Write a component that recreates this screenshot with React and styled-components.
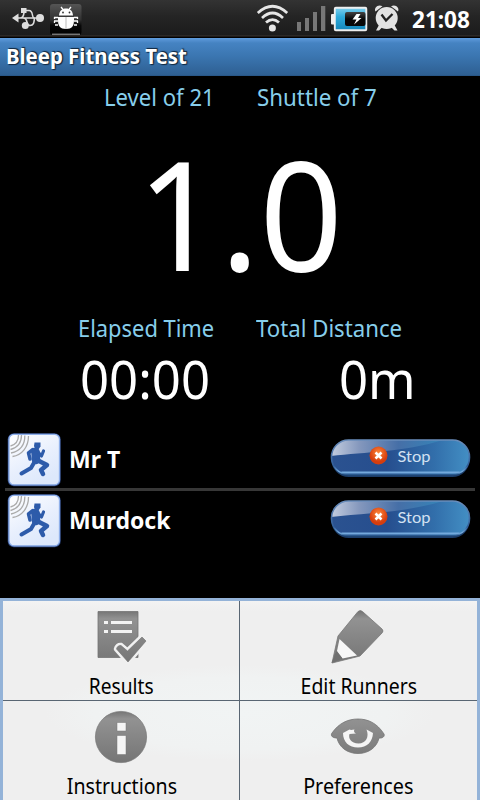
import React from 'react';
import styled, { createGlobalStyle } from 'styled-components';

const Global = createGlobalStyle`
  * { box-sizing: border-box; }
  body { margin: 0; background: #000; font-family: "Noto Sans", sans-serif; }
  svg { display: block; flex: none; }
`;

const Screen = styled.div`
  width: 480px;
  height: 800px;
  overflow: hidden;
  display: flex;
  flex-direction: column;
  background: #000;
  color: #fff;
`;

const StatusBar = styled.header`
  height: 38px;
  flex: none;
  display: flex;
  align-items: flex-start;
  padding-left: 11px;
  background: linear-gradient(#333 0, #242424 17px, #1b1b1b 35px, #3c3530 36px, #000 37px);
`;

const Spacer = styled.div`
  flex: 1;
`;

const Text = styled.span`
  display: block;
  width: max-content;
  white-space: nowrap;
  font-size: ${(p) => p.$size}px;
  line-height: ${(p) => p.$line}px;
  font-weight: ${(p) => (p.$bold ? 700 : 400)};
  transform: scaleX(${(p) => p.$squeeze || 1});
  transform-origin: ${(p) => p.$origin || 'left'} center;
`;

const Clock = styled.div`
  width: 69px;
  padding: 3px 0 0 1px;
`;

const TitleBar = styled.div`
  height: 38px;
  flex: none;
  padding: 3px 0 0 6px;
  background: linear-gradient(#5f9bdc 0, #4583c2 5px, #3b76b1 18px, #2e5f92 37px, #23507f 38px);
  text-shadow: 1px -1px 1px #10263d, 1px 1px 1px #10263d;
`;

const Captions = styled.div`
  display: grid;
  grid-template-columns: ${(p) => p.$columns};
  padding-left: ${(p) => p.$left}px;
  height: 28px;
  margin-top: ${(p) => p.$top}px;
  color: #87ceeb;
`;

const Score = styled.div`
  height: 160px;
  margin-top: 22px;
  padding-left: 136.5px;
`;

const Readings = styled.div`
  display: grid;
  grid-template-columns: 259px 1fr;
  height: 60px;
  margin-top: 7px;
  padding-left: 80px;
`;

const RunnerList = styled.div`
  margin: 21px 5px 0;
`;

const Runner = styled.div`
  display: flex;
  align-items: flex-start;
  height: 61px;
  padding: 2px 3px 0 2px;
  border-bottom: 3px solid ${(p) => (p.$last ? 'transparent' : '#373737')};
`;

const RunnerName = styled.div`
  flex: 1;
  padding: 10px 0 0 7px;
`;

const StopButton = styled.button`
  width: 142px;
  height: 42px;
  margin-top: 5px;
  padding: 0;
  border: 0;
  background: none;
`;

const Menu = styled.nav`
  flex: 1;
  margin-top: 46px;
  border: 3px solid #94b3d8;
  border-bottom: 0;
  display: grid;
  grid-template-columns: 237px 237px;
  grid-template-rows: 100px 99px;
  background:
    radial-gradient(ellipse 195px 48px at 237px 112px, #f1f4f4 0, #f0f2f2 75%, transparent 100%),
    linear-gradient(#f3f3f3, #efefef 10px);
`;

const MenuItem = styled.div`
  display: flex;
  flex-direction: column;
  align-items: center;
  color: #000;
  border-bottom: ${(p) => (p.$top ? '1px solid #596673' : '0')};
  border-right: ${(p) => (p.$left ? '1px solid #596673' : '0')};
  padding-top: 5px;
  padding-left: ${(p) => (p.$left ? 1 : 0)}px;
`;

const MenuIcon = styled.div`
  height: 65px;
  margin-right: 2px;
`;

const UsbIcon = () => (
  <svg width="34" height="36" viewBox="11 0 34 36" fill="none" stroke="#ddd" strokeWidth="1.8">
    <path d="M16 18H40M20 18C26 18 22 10.500 26 10.500M23 18C29 18 25 25.500 30 25.500C34 25.500 34 22 34.500 18" strokeWidth="1.600" />
    <path d="M26 10.500H29C34 10.500 31 18 34.500 18" strokeWidth="1.500" />
    <path d="M12 18L18.500 13.500V22.500Z" fill="#ddd" stroke="none" />
    <rect x="21" y="8" width="5.500" height="5" fill="#ddd" stroke="none" />
    <circle cx="25.300" cy="25.500" r="3.500" fill="#ddd" stroke="none" />
    <circle cx="40" cy="18" r="4" fill="#ddd" stroke="none" />
  </svg>
);

const BugIcon = () => (
  <svg width="38" height="36" viewBox="45 0 38 36">
    <defs>
      <linearGradient id="bug" x2="0" y2="1">
        <stop stopColor="#555" />
        <stop offset=".5" stopColor="#333" />
        <stop offset=".7" stopColor="#080808" />
        <stop offset="1" stopColor="#000" />
      </linearGradient>
    </defs>
    <rect x="50" y="4" width="31.500" height="31" rx="3" fill="url(#bug)" />
    <path d="M52 34.200H80" stroke="#aaa" strokeWidth="1" />
    <g fill="#fff">
      <path d="M59 15.500C59.500 10.500 62 8.500 66 8.500S72.500 10.500 73 15.500Z" />
      <path d="M58 17H74V20C74 26 72 29 66 29S58 26 58 20Z" />
    </g>
    <path d="M61 7L63.500 10M71 7L68.500 10M54 17.500H58M54 21H58M55 25H58M54.500 17V19M54.500 21V23M74 17.500H78M74 21H78M74 25H77M77.500 17V19M77.500 21V23" stroke="#fff" strokeWidth="1.300" />
    <path d="M66 17V29" stroke="#aaa" strokeWidth=".8" />
    <circle cx="63" cy="12.500" r=".9" fill="#333" />
    <circle cx="69.500" cy="12.500" r=".9" fill="#333" />
  </svg>
);

const StatusIcons = () => (
  <svg width="156" height="37" viewBox="255 0 156 37">
    <defs>
      <linearGradient id="charge" x2="0" y2="1">
        <stop stopColor="#7fd0ee" />
        <stop offset=".4" stopColor="#2eaada" />
        <stop offset="1" stopColor="#1487bb" />
      </linearGradient>
      <linearGradient id="cell" x2="0" y2="1">
        <stop stopColor="#444" />
        <stop offset=".5" stopColor="#080808" />
      </linearGradient>
    </defs>
    <g fill="none" stroke="#e6e6e6" strokeWidth="2.700">
      <path d="M257.800 13Q272.500 -.5 287.200 13" />
      <path d="M262 18Q272.500 8 283 18" />
      <path d="M266 22.600Q272.500 16.500 279 22.600" />
    </g>
    <circle cx="272.400" cy="28" r="3.500" fill="#e6e6e6" />
    <path d="M297 22h4v9h-4zM305 18h4v13h-4zM313 12h4v19h-4zM321 6h4.300v25H321z" fill="#777" />
    <rect x="331" y="14" width="4" height="10.500" rx="1" fill="#eee" />
    <rect x="334.800" y="7.800" width="31.500" height="22.500" rx="1" fill="url(#charge)" stroke="#eee" strokeWidth="1.900" />
    <rect x="345" y="12" width="20.500" height="14" rx="2" fill="url(#cell)" />
    <path d="M356.500 14L352.500 19.500H356.500L354 24.500L361.500 18H358L360.500 14Z" fill="#fff" />
    <g fill="#e3e3e3">
      <circle cx="386.700" cy="18" r="11" />
      <path d="M375.500 11.500C373.500 8 378 3.500 382.500 6.300ZM398 11.500C400 8 395.500 3.500 391 6.300Z" />
      <path d="M379 25L376 30.500H379L382.500 27ZM394.500 25L397.500 30.500H394.500L391 27Z" />
    </g>
    <path d="M381.500 14.500L386 20.500L392.500 14" fill="none" stroke="#222" strokeWidth="2.300" />
  </svg>
);

const RunnerIcon = () => (
  <svg width="55" height="56" viewBox="7 432 55 56">
    <defs>
      <linearGradient id="tile" x2=".6" y2="1">
        <stop stopColor="#fff" />
        <stop offset=".6" stopColor="#e8effd" />
        <stop offset="1" stopColor="#dde8fb" />
      </linearGradient>
    </defs>
    <rect x="7.700" y="433.200" width="53" height="53" rx="6" fill="#2c4680" />
    <rect x="9" y="434.300" width="50.500" height="50.500" rx="5" fill="url(#tile)" stroke="#8fb0ea" strokeWidth="1.300" />
    <g fill="none" stroke="#aaa" strokeWidth="1.300">
      <path d="M18.500 435C18.500 441 16 444.500 10.500 446M21.500 435C21.500 443 18 447.500 10.500 449.500M24.800 435.500C25 445 20 451 11 453M28.500 436C28.500 447 22 455 12.500 456.500" />
    </g>
    <path d="M34.500 442.500H40.500V446.500L38.500 449.500H35L34 446Z" fill="#2d5baa" />
    <g fill="none" stroke="#2d5baa" strokeLinejoin="round" strokeLinecap="round">
      <path d="M35.500 452L36 460" strokeWidth="8.500" />
      <path d="M33 449.500L28.500 453L30 459" strokeWidth="3.500" />
      <path d="M38 452L41.500 456L43.500 451" strokeWidth="3.200" />
      <path d="M35 461L31 468L21.500 473.500" strokeWidth="4" />
      <path d="M38 460.500L47 465L41 470L43 474" strokeWidth="4.500" />
    </g>
  </svg>
);

const StopArt = () => (
  <svg width="142" height="42" viewBox="330 437 142 42">
    <defs>
      <linearGradient id="pill">
        <stop stopColor="#2b5290" />
        <stop offset=".4" stopColor="#264e8e" />
        <stop offset=".75" stopColor="#326fab" />
        <stop offset="1" stopColor="#438fc4" />
      </linearGradient>
      <linearGradient id="gloss">
        <stop stopColor="#c4cee0" />
        <stop offset=".25" stopColor="#8598bd" />
        <stop offset=".6" stopColor="#466fa7" />
        <stop offset="1" stopColor="#3585b9" />
      </linearGradient>
      <linearGradient id="edge" x2="0" y2="1">
        <stop stopColor="#698dbb" />
        <stop offset=".75" stopColor="#315e99" />
        <stop offset=".93" stopColor="#77aee0" />
        <stop offset="1" stopColor="#28588e" />
      </linearGradient>
      <radialGradient id="cross" cy=".35">
        <stop stopColor="#ff8a3c" />
        <stop offset="1" stopColor="#d63d0e" />
      </radialGradient>
      <clipPath id="pillClip"><rect x="331.500" y="440" width="138" height="34.500" rx="17" /></clipPath>
    </defs>
    <rect x="331.500" y="441" width="138" height="36" rx="17" fill="#1b3c68" />
    <rect x="331.500" y="440" width="138" height="34.500" rx="17" fill="url(#pill)" />
    <path d="M331 456C365 452 405 452 443 440H331Z" fill="url(#gloss)" clipPath="url(#pillClip)" />
    <path d="M342 472.500H459" stroke="#74a9dc" strokeWidth="2" strokeLinecap="round" />
    <rect x="331.500" y="440" width="138" height="34.500" rx="17" fill="none" stroke="url(#edge)" strokeWidth="1.600" />
    <circle cx="378.500" cy="455.500" r="9" fill="url(#cross)" />
    <path d="M375.500 452.500L381.500 458.500M381.500 452.500L375.500 458.500" stroke="#fff" strokeWidth="2.500" />
    <text x="397.500" y="462.300" fontFamily="Lato, sans-serif" fontSize="15.500" textLength="33" lengthAdjust="spacingAndGlyphs" fill="#d3e1f2">Stop</text>
  </svg>
);

const IconGradient = () => (
  <defs>
    <linearGradient id="grey" gradientUnits="userSpaceOnUse" x1="0" y1="4" x2="0" y2="56">
      <stop stopColor="#747474" />
      <stop offset=".15" stopColor="#929292" />
      <stop offset="1" stopColor="#757575" />
    </linearGradient>
  </defs>
);

const CHECK = 'M27.500 42C28 39.500 30 38 32 38.500L38.500 44L53 30L57 34L39 55Z';

const ResultsIcon = () => (
  <svg width="64" height="65" viewBox="0 -1 64 65">
    <IconGradient />
    <path d="M9 4.500H49V50.500H9Z" fill="url(#grey)" stroke="#747474" strokeWidth=".8" />
    <path d="M15 14h4v3h-4zM22 14h21v3H22zM15 23h4v3h-4zM22 23h21v3H22z" fill="#f3f3f3" />
    <path d={CHECK} fill="#f0f0f0" stroke="#f0f0f0" strokeWidth="5.500" strokeLinejoin="round" />
    <path d={CHECK} fill="url(#grey)" stroke="#707070" strokeWidth=".6" />
  </svg>
);

const PencilIcon = () => (
  <svg width="64" height="65" viewBox="0 -1 64 65">
    <path d="M32 4.500Q34.500 2.500 37 5L56 22Q58 24 56 26L34 49L6 56L12 29Z" fill="url(#grey)" stroke="#777" strokeWidth=".8" />
    <path d="M13.500 32L31 48.500L16.500 51.500L11 44Z" fill="#f7f7f7" />
    <path d="M5.500 56L10.500 44L16.500 51.500Z" fill="#707070" />
  </svg>
);

const InfoIcon = () => (
  <svg width="64" height="65" viewBox="0 -1 64 65">
    <circle cx="32" cy="30" r="25.600" fill="url(#grey)" stroke="#777" strokeWidth=".7" />
    <path d="M28 15.500h9v8.500h-9zM28 28.500h9v19h-9z" fill="#f5f5f5" stroke="#777" strokeWidth=".5" />
  </svg>
);

const EyeIcon = () => (
  <svg width="64" height="65" viewBox="0 -1 64 65">
    <path d="M6 26C13 16 22 12 32 12S51 16 58 27C59 29 57 31.500 53 31C51 40 43 46.500 32 46.500S13 40 11 31C7 31 4 29 6 26Z" fill="url(#grey)" stroke="#737373" strokeWidth=".8" />
    <path d="M23.500 22.500L17 26C17 35 23 40.500 32 40.500S46.500 35 47 26L40.500 22.500C43.500 30 40 36.500 32.500 36.500C25 36.500 22 31 23.500 27L30 26.500C28 25.500 27.500 24 28.500 22.500C26.500 22.500 25 23.500 23.500 22.500Z" fill="#f5f5f5" />
  </svg>
);

const runners = ['Mr T', 'Murdock'];
const menu = [
  { label: 'Results', Icon: ResultsIcon, squeeze: 0.87 },
  { label: 'Edit Runners', Icon: PencilIcon, squeeze: 0.885 },
  { label: 'Instructions', Icon: InfoIcon, squeeze: 0.89 },
  { label: 'Preferences', Icon: EyeIcon, squeeze: 0.9 },
];

export default function App() {
  return (
    <Screen>
      <Global />
      <StatusBar>
        <UsbIcon />
        <BugIcon />
        <Spacer />
        <StatusIcons />
        <Clock><Text $size={23} $line={32} $bold $squeeze={0.98}>21:08</Text></Clock>
      </StatusBar>
      <TitleBar><Text $size={21} $line={30} $bold $squeeze={0.97}>Bleep Fitness Test</Text></TitleBar>
      <Captions $left={104} $top={7} $columns="153px 1fr">
        <Text $size={24} $line={28} $squeeze={0.92}>Level of 21</Text>
        <Text $size={24} $line={28} $squeeze={0.93}>Shuttle of 7</Text>
      </Captions>
      <Score><Text $size={151} $line={159} $squeeze={0.965}>1.0</Text></Score>
      <Captions $left={78} $top={21} $columns="178px 1fr">
        <Text $size={24} $line={28} $squeeze={0.912}>Elapsed Time</Text>
        <Text $size={24} $line={28} $squeeze={0.925}>Total Distance</Text>
      </Captions>
      <Readings>
        <Text $size={53} $line={60} $squeeze={0.96}>00:00</Text>
        <Text $size={53} $line={60} $squeeze={0.96}>0m</Text>
      </Readings>
      <RunnerList>
        {runners.map((name, i) => (
          <Runner key={name} $last={i === runners.length - 1}>
            <RunnerIcon />
            <RunnerName><Text $size={23} $line={34} $bold>{name}</Text></RunnerName>
            <StopButton><StopArt /></StopButton>
          </Runner>
        ))}
      </RunnerList>
      <Menu>
        {menu.map(({ label, Icon, squeeze }, i) => (
          <MenuItem key={label} $top={i < 2} $left={i % 2 === 0}>
            <MenuIcon><Icon /></MenuIcon>
            <Text $size={22} $line={28} $squeeze={squeeze} $origin="center">{label}</Text>
          </MenuItem>
        ))}
      </Menu>
    </Screen>
  );
}
